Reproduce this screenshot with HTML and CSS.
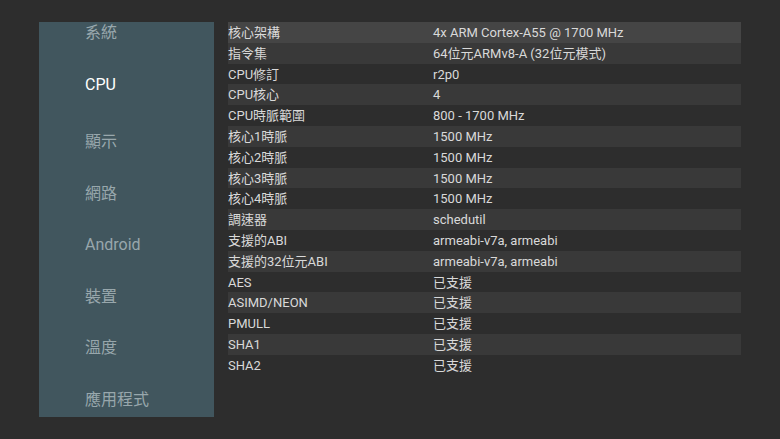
FILE: index.html
```html
<!DOCTYPE html>
<html lang="zh-Hant">
  <head>
    <meta charset="UTF-8" />
    <title>CPU</title>
    <link rel="stylesheet" href="styles.css">
  </head>
  <body>
    <div class="screen">
      <div class="sidebar">
        <ul class="menu">
          <li>系統</li>
          <li class="active">CPU</li>
          <li>顯示</li>
          <li>網路</li>
          <li>Android</li>
          <li>裝置</li>
          <li>溫度</li>
          <li>應用程式</li>
        </ul>
      </div>

      <div class="info">
        <div class="row focus"><span class="key">核心架構</span><span>4x ARM Cortex-A55 @ 1700 MHz</span></div>
        <div class="row"><span class="key">指令集</span><span>64位元ARMv8-A (32位元模式)</span></div>
        <div class="row"><span class="key">CPU修訂</span><span>r2p0</span></div>
        <div class="row"><span class="key">CPU核心</span><span>4</span></div>
        <div class="row"><span class="key">CPU時脈範圍</span><span>800 - 1700 MHz</span></div>
        <div class="row"><span class="key">核心1時脈</span><span>1500 MHz</span></div>
        <div class="row"><span class="key">核心2時脈</span><span>1500 MHz</span></div>
        <div class="row"><span class="key">核心3時脈</span><span>1500 MHz</span></div>
        <div class="row"><span class="key">核心4時脈</span><span>1500 MHz</span></div>
        <div class="row"><span class="key">調速器</span><span>schedutil</span></div>
        <div class="row"><span class="key">支援的ABI</span><span>armeabi-v7a, armeabi</span></div>
        <div class="row"><span class="key">支援的32位元ABI</span><span>armeabi-v7a, armeabi</span></div>
        <div class="row"><span class="key">AES</span><span>已支援</span></div>
        <div class="row"><span class="key">ASIMD/NEON</span><span>已支援</span></div>
        <div class="row"><span class="key">PMULL</span><span>已支援</span></div>
        <div class="row"><span class="key">SHA1</span><span>已支援</span></div>
        <div class="row"><span class="key">SHA2</span><span>已支援</span></div>
      </div>
    </div>
  </body>
</html>
```

FILE: styles.css
```css
html, body {
  margin: 0;
  padding: 0;
  background-color: #2d2d2d;
  font-family: Roboto, "Noto Sans CJK TC", sans-serif;
}

.screen {
  width: 780px;
  height: 439px;
  display: flex;
  align-items: flex-start;
  padding: 22px 0 0 39px;
  box-sizing: border-box;
  gap: 14px;
}

.sidebar {
  width: 175px;
  height: 395px;
  background-color: #41565e;
  overflow: hidden;
}

.menu {
  list-style: none;
  margin: -15px 0 0 0;
  padding: 0 0 0 46px;
}

.menu li {
  height: 51.5px;
  line-height: 51.5px;
  font-size: 16px;
  color: #98a7ac;
}

.menu li.active {
  color: #ffffff;
  margin-bottom: 6px;
}

.info {
  width: 513px;
  display: flex;
  flex-direction: column;
}

.row {
  display: flex;
  height: 20.8px;
  line-height: 22px;
  font-size: 13px;
  color: #d9d9d9;
}

.row:nth-child(even) {
  background-color: #393939;
}

.row.focus {
  background-color: #454545;
}

.key {
  width: 205px;
  flex-shrink: 0;
}
```
